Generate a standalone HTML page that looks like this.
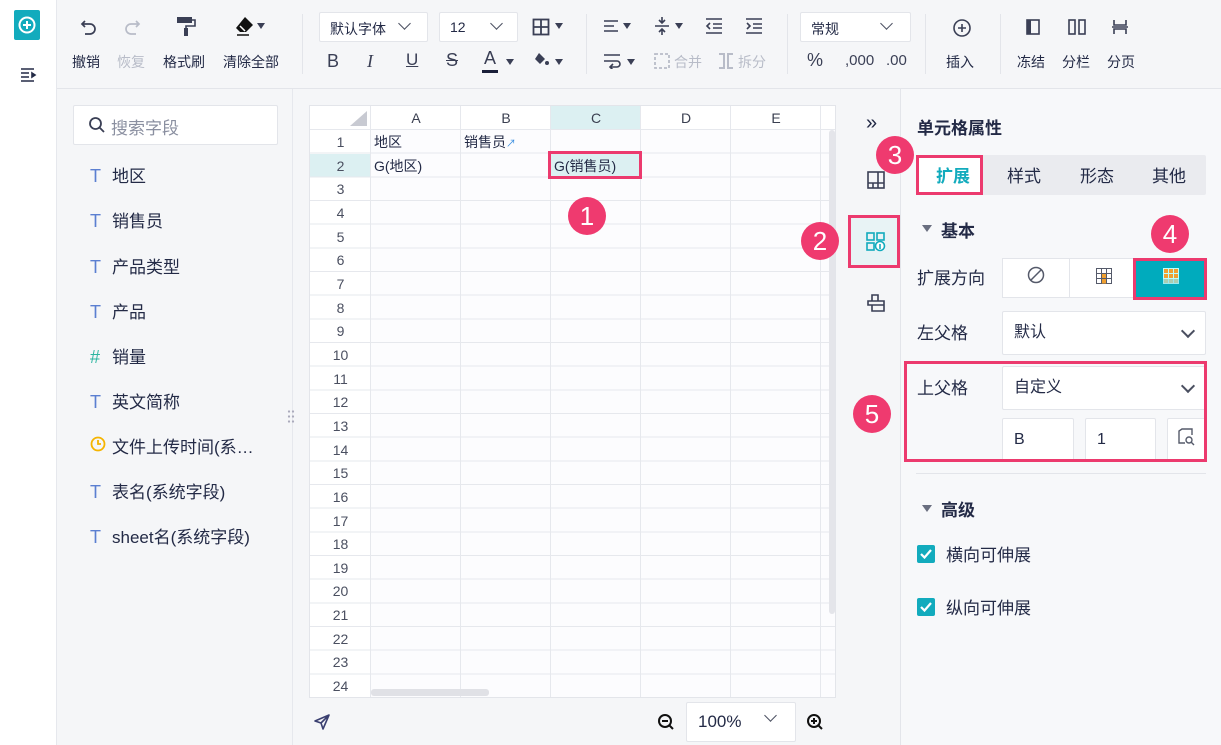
<!DOCTYPE html>
<html><head><meta charset="utf-8"><style>
*{box-sizing:border-box;margin:0;padding:0}
body{width:1221px;height:745px;overflow:hidden;background:#f5f6f8;font-family:"Liberation Sans","Noto Sans CJK SC",sans-serif;color:#232a46;position:relative;font-size:14px}
.a{position:absolute}
.lb{left:0;top:0;width:57px;height:745px;background:#fff;border-right:1px solid #e6e8ed;z-index:0}
.tb{left:57px;top:0;width:1164px;height:89px;border-bottom:1px solid #e3e5ea;background:#f5f6f8}
.lbl{font-size:14px;color:#232a46;white-space:nowrap}
.dis{color:#b8bcc8}
.sel{background:#fff;border:1px solid #e3e5ea;border-radius:2px;height:30px;font-size:14px;padding:6px 10px}
.vs{width:1px;background:#e3e5ea}
.fp{left:57px;top:89px;width:236px;height:656px;border-right:1px solid #e6e8ed}
.fi{left:90px;font-size:17px;color:#232a46;white-space:nowrap}
.fi b{color:#5b7fd1;font-weight:normal;display:inline-block;width:22px;font-size:18px}
.grid{left:309px;top:105px;width:527px;height:593px;background:#fcfcfe;border:1px solid #e3e5ea;overflow:hidden}
.hl{position:absolute;left:0;width:527px;height:1px;background:#e6e8ed}
.vl{position:absolute;top:0;width:1px;height:593px;background:#e6e8ed}
.ch{position:absolute;top:0;height:24px;text-align:center;font-size:14px;line-height:24px;color:#3a3f50;background:#fff}
.badge{width:38px;height:38px;border-radius:50%;background:#ef3a6f;color:#fff;font-size:26px;text-align:center;line-height:38px}
.rbox{border:3px solid #ec3a6e}
.ic{left:851px;top:89px;width:50px;height:656px;border-right:1px solid #e3e5ea;background:#f5f6f8}
.rp{left:901px;top:89px;width:320px;height:656px;background:#f7f8fa}
.inp{background:#fff;border:1px solid #e3e5ea;border-radius:2px;font-size:16px;padding:0 11px;line-height:42px;height:44px}
.chev{position:absolute;right:12px;top:14px;width:10px;height:10px;border-right:2px solid #4a4f60;border-bottom:2px solid #4a4f60;transform:rotate(45deg)}
.cb{width:18px;height:18px;background:#12abbd;border-radius:2px}
.rn div{height:23.67px;line-height:24px;text-align:center;color:#4a4f60}
</style></head><body>
<div class="a lb"></div>
<div class="a" style="left:14px;top:10px;width:26px;height:30px;background:#12abbd;border-radius:2px"></div>
<svg class="a" style="left:17px;top:15px" width="20" height="20" viewBox="0 0 20 20"><circle cx="10" cy="10" r="7.5" fill="none" stroke="#fff" stroke-width="2"/><path d="M10 6v8M6 10h8" stroke="#fff" stroke-width="2"/></svg>
<svg class="a" style="left:20px;top:67px" width="18" height="16" viewBox="0 0 18 16"><path d="M1 2h13M1 6h8M1 10h8M1 14h13M12 6l3 2-3 2z" stroke="#232a46" stroke-width="1.6" fill="#232a46"/></svg>

<div class="a tb"></div>
<svg class="a" style="left:79px;top:17px" width="20" height="20" viewBox="0 0 20 20"><path d="M6 4L3 7l3 3M3 7h8a5 5 0 010 10H6" fill="none" stroke="#3a3f55" stroke-width="1.7"/></svg>
<svg class="a" style="left:122px;top:17px" width="20" height="20" viewBox="0 0 20 20"><path d="M14 4l3 3-3 3M17 7H9a5 5 0 000 10h5" fill="none" stroke="#b8bcc8" stroke-width="1.7"/></svg>
<svg class="a" style="left:175px;top:15px" width="22" height="22" viewBox="0 0 22 22"><rect x="2" y="2" width="15" height="6" fill="#3a3f55"/><path d="M17 5h3v6h-9v3" fill="none" stroke="#3a3f55" stroke-width="1.6"/><rect x="9" y="13" width="4" height="8" fill="#3a3f55"/></svg>
<svg class="a" style="left:234px;top:15px" width="22" height="22" viewBox="0 0 22 22"><path d="M11 2l8 8-7 7H6L2 13z" fill="#111"/><path d="M6 11l5 5" stroke="#fff" stroke-width="1.5"/><path d="M3 20h12" stroke="#111" stroke-width="1.5"/></svg>
<svg class="a" style="left:257px;top:23px" width="8" height="6"><path d="M0 0h8L4 6z" fill="#3a3f55"/></svg>
<div class="a lbl" style="left:72px;top:52px">撤销</div>
<div class="a lbl dis" style="left:117px;top:52px">恢复</div>
<div class="a lbl" style="left:163px;top:52px">格式刷</div>
<div class="a lbl" style="left:223px;top:52px">清除全部</div>
<div class="a vs" style="left:302px;top:14px;height:60px"></div>
<div class="a sel" style="left:319px;top:12px;width:109px">默认字体</div>
<div class="a chev" style="left:400px;top:19px;width:9px;height:9px;border-width:0 1.5px 1.5px 0"></div>
<div class="a sel" style="left:439px;top:12px;width:79px">12</div>
<div class="a chev" style="left:492px;top:19px;width:9px;height:9px;border-width:0 1.5px 1.5px 0"></div>
<svg class="a" style="left:532px;top:18px" width="18" height="18" viewBox="0 0 18 18"><rect x="1.5" y="1.5" width="15" height="15" fill="none" stroke="#3a3f55" stroke-width="1.8"/><path d="M9 1v16M1 9h16" stroke="#3a3f55" stroke-width="1.8"/></svg>
<svg class="a" style="left:555px;top:23px" width="8" height="6"><path d="M0 0h8L4 6z" fill="#3a3f55"/></svg>
<div class="a" style="left:327px;top:51px;font-size:18px;color:#3a3f55">B</div>
<div class="a" style="left:367px;top:51px;font-size:18px;color:#3a3f55;font-style:italic;font-family:'Liberation Serif',serif">I</div>
<div class="a" style="left:406px;top:50px;font-size:17px;color:#3a3f55;text-decoration:underline">U</div>
<div class="a" style="left:446px;top:50px;font-size:18px;color:#3a3f55;text-decoration:line-through">S</div>
<div class="a" style="left:484px;top:48px;font-size:18px;color:#3a3f55">A</div>
<div class="a" style="left:482px;top:70px;width:16px;height:3px;background:#1a1f3a"></div>
<svg class="a" style="left:506px;top:59px" width="8" height="6"><path d="M0 0h8L4 6z" fill="#3a3f55"/></svg>
<svg class="a" style="left:532px;top:52px" width="18" height="16" viewBox="0 0 18 16"><path d="M7 1l6 6-5 5-5-5z" fill="#3a3f55"/><circle cx="15" cy="11" r="2" fill="#3a3f55"/></svg>
<svg class="a" style="left:555px;top:59px" width="8" height="6"><path d="M0 0h8L4 6z" fill="#3a3f55"/></svg>
<div class="a vs" style="left:586px;top:14px;height:60px"></div>
<svg class="a" style="left:603px;top:18px" width="16" height="16" viewBox="0 0 16 16"><path d="M1 3h14M1 8h10M1 13h14" stroke="#3a3f55" stroke-width="1.6"/></svg>
<svg class="a" style="left:623px;top:23px" width="8" height="6"><path d="M0 0h8L4 6z" fill="#3a3f55"/></svg>
<svg class="a" style="left:654px;top:16px" width="16" height="20" viewBox="0 0 16 20"><path d="M1 10h14M8 1v6M5 4l3 3 3-3M8 19v-6M5 16l3-3 3 3" fill="none" stroke="#3a3f55" stroke-width="1.6"/></svg>
<svg class="a" style="left:675px;top:23px" width="8" height="6"><path d="M0 0h8L4 6z" fill="#3a3f55"/></svg>
<svg class="a" style="left:705px;top:17px" width="18" height="18" viewBox="0 0 18 18"><path d="M1 2h16M8 7h9M8 11h9M1 16h16M5 6L2 9l3 3" fill="none" stroke="#3a3f55" stroke-width="1.6"/></svg>
<svg class="a" style="left:745px;top:17px" width="18" height="18" viewBox="0 0 18 18"><path d="M1 2h16M8 7h9M8 11h9M1 16h16M2 6l3 3-3 3" fill="none" stroke="#3a3f55" stroke-width="1.6"/></svg>
<svg class="a" style="left:603px;top:53px" width="18" height="16" viewBox="0 0 18 16"><path d="M1 2h16M1 8h13a3 3 0 010 6H8M10 11l-3 3 3 3" fill="none" stroke="#3a3f55" stroke-width="1.6"/></svg>
<svg class="a" style="left:627px;top:59px" width="8" height="6"><path d="M0 0h8L4 6z" fill="#3a3f55"/></svg>
<svg class="a" style="left:654px;top:53px" width="16" height="16" viewBox="0 0 16 16"><rect x="1" y="1" width="14" height="14" fill="none" stroke="#b8bcc8" stroke-width="1.8" stroke-dasharray="3 2"/></svg>
<div class="a lbl dis" style="left:674px;top:52px">合并</div>
<svg class="a" style="left:718px;top:53px" width="16" height="16" viewBox="0 0 16 16"><path d="M1 1h5v14H1M15 1h-5v14h5" fill="none" stroke="#b8bcc8" stroke-width="2"/></svg>
<div class="a lbl dis" style="left:738px;top:52px">拆分</div>
<div class="a vs" style="left:787px;top:14px;height:60px"></div>
<div class="a sel" style="left:800px;top:12px;width:111px">常规</div>
<div class="a chev" style="left:882px;top:19px;width:9px;height:9px;border-width:0 1.5px 1.5px 0"></div>
<div class="a" style="left:807px;top:50px;font-size:18px;color:#3a3f55">%</div>
<div class="a" style="left:845px;top:52px;font-size:15px;color:#3a3f55">,000</div>
<div class="a" style="left:886px;top:52px;font-size:15px;color:#3a3f55">.00</div>
<div class="a vs" style="left:925px;top:14px;height:60px"></div>
<svg class="a" style="left:952px;top:18px" width="20" height="20" viewBox="0 0 20 20"><circle cx="10" cy="10" r="8" fill="none" stroke="#3a3f55" stroke-width="1.6"/><path d="M10 6v8M6 10h8" stroke="#3a3f55" stroke-width="1.6"/></svg>
<div class="a lbl" style="left:946px;top:52px">插入</div>
<div class="a vs" style="left:1000px;top:14px;height:60px"></div>
<svg class="a" style="left:1025px;top:19px" width="16" height="16" viewBox="0 0 16 16"><rect x="2" y="1" width="12" height="14" fill="none" stroke="#3a3f55" stroke-width="1.6"/><rect x="2" y="1" width="4" height="14" fill="#3a3f55"/></svg>
<svg class="a" style="left:1068px;top:19px" width="18" height="16" viewBox="0 0 18 16"><rect x="1" y="1" width="6" height="14" fill="none" stroke="#3a3f55" stroke-width="1.6"/><rect x="11" y="1" width="6" height="14" fill="none" stroke="#3a3f55" stroke-width="1.6"/></svg>
<svg class="a" style="left:1112px;top:19px" width="16" height="16" viewBox="0 0 16 16"><path d="M2 1v5h12V1M2 15v-5h12v5M0 8h16" fill="none" stroke="#3a3f55" stroke-width="1.6"/></svg>
<div class="a lbl" style="left:1017px;top:52px">冻结</div>
<div class="a lbl" style="left:1062px;top:52px">分栏</div>
<div class="a lbl" style="left:1107px;top:52px">分页</div>

<div class="a fp"></div>
<div class="a" style="left:73px;top:105px;width:205px;height:40px;background:#fff;border:1px solid #e3e5ea;border-radius:2px"></div>
<svg class="a" style="left:88px;top:116px" width="18" height="18" viewBox="0 0 18 18"><circle cx="7.5" cy="7.5" r="5.5" fill="none" stroke="#3a3f55" stroke-width="1.8"/><path d="M11.5 11.5L16 16" stroke="#3a3f55" stroke-width="1.8"/></svg>
<div class="a" style="left:111px;top:114px;font-size:17px;color:#8a8fa0">搜索字段</div>
<div class="a fi" style="top:162px"><b>T</b>地区</div>
<div class="a fi" style="top:207px"><b>T</b>销售员</div>
<div class="a fi" style="top:253px"><b>T</b>产品类型</div>
<div class="a fi" style="top:298px"><b>T</b>产品</div>
<div class="a fi" style="top:343px"><b style="color:#2bb5a0">#</b>销量</div>
<div class="a fi" style="top:388px"><b>T</b>英文简称</div>
<svg class="a" style="left:90px;top:436px" width="16" height="16" viewBox="0 0 16 16"><circle cx="8" cy="8" r="6.5" fill="none" stroke="#f5b400" stroke-width="1.8"/><path d="M8 4v4h3" fill="none" stroke="#f5b400" stroke-width="1.8"/></svg>
<div class="a fi" style="top:433px;left:112px">文件上传时间(系…</div>
<div class="a fi" style="top:478px"><b>T</b>表名(系统字段)</div>
<div class="a fi" style="top:523px"><b>T</b>sheet名(系统字段)</div>
<div class="a" style="left:287px;top:409px;width:8px;height:16px;background:radial-gradient(circle,#aab 1px,transparent 1.3px) 0 0/4px 5px"></div>

<div class="a grid">
<div class="ch" style="left:0;width:61px"></div>
<svg style="position:absolute;left:40px;top:5px" width="17" height="15"><path d="M17 0v15H0z" fill="#c8cad2"/></svg>
<div class="ch" style="left:61px;width:90px">A</div>
<div class="ch" style="left:151px;width:90px">B</div>
<div class="ch" style="left:241px;width:90px;background:#dcf0f2">C</div>
<div class="ch" style="left:331px;width:90px">D</div>
<div class="ch" style="left:421px;width:90px">E</div>
<div class="ch" style="left:511px;width:16px"></div>
<div class="rn" style="position:absolute;left:0;top:24px;width:61px;background:#fff">
<div>1</div><div style="background:#dcf0f2">2</div><div>3</div><div>4</div><div>5</div><div>6</div><div>7</div><div>8</div><div>9</div><div>10</div><div>11</div><div>12</div><div>13</div><div>14</div><div>15</div><div>16</div><div>17</div><div>18</div><div>19</div><div>20</div><div>21</div><div>22</div><div>23</div><div>24</div>
</div>
<div style="position:absolute;left:0;top:24px;width:527px;height:569px;background:repeating-linear-gradient(to bottom,transparent 0,transparent 22.67px,#e6e8ed 22.67px,#e6e8ed 23.67px)"></div>
<div class="hl" style="top:23px"></div>
<div class="vl" style="left:60px"></div>
<div class="vl" style="left:150px"></div>
<div class="vl" style="left:240px"></div>
<div class="vl" style="left:330px"></div>
<div class="vl" style="left:420px"></div>
<div class="vl" style="left:510px"></div>
<div style="position:absolute;left:64px;top:26px;font-size:14px">地区</div>
<div style="position:absolute;left:154px;top:26px;font-size:14px">销售员<span style="color:#3a8ee0;font-size:10px">↗</span></div>
<div style="position:absolute;left:241px;top:48px;width:91px;height:24px;background:#dcf0f2"></div>
<div style="position:absolute;left:64px;top:50px;font-size:14px">G(地区)</div>
<div style="position:absolute;left:244px;top:50px;font-size:14px">G(销售员)</div>
<div style="position:absolute;left:519px;top:24px;width:6px;height:484px;background:#e4e5ea;border-radius:3px"></div>
<div style="position:absolute;left:61px;top:583px;width:118px;height:7px;background:#e0e1e6;border-radius:3px"></div>
</div>
<div class="a rbox" style="left:548px;top:151px;width:94px;height:28px"></div>
<div class="a badge" style="left:568px;top:197px">1</div>

<svg class="a" style="left:313px;top:713px" width="18" height="18" viewBox="0 0 18 18"><path d="M16 2L2 8l6 2 2 6z M8 10l8-8" fill="none" stroke="#3a3f70" stroke-width="1.6" stroke-linejoin="round"/></svg>
<svg class="a" style="left:657px;top:713px" width="18" height="18" viewBox="0 0 18 18"><circle cx="8" cy="8" r="6" fill="none" stroke="#111" stroke-width="2"/><path d="M5 8h6M12 12l4 4" stroke="#111" stroke-width="2"/></svg>
<div class="a" style="left:686px;top:702px;width:110px;height:40px;background:#fff;border:1px solid #e3e5ea;border-radius:2px;font-size:17px;padding:9px 0 0 11px">100%</div>
<div class="a chev" style="left:766px;top:711px;width:9px;height:9px;border-width:0 1.5px 1.5px 0"></div>
<svg class="a" style="left:806px;top:713px" width="18" height="18" viewBox="0 0 18 18"><circle cx="8" cy="8" r="6" fill="none" stroke="#111" stroke-width="2"/><path d="M5 8h6M8 5v6M12 12l4 4" stroke="#111" stroke-width="2"/></svg>

<div class="a ic"></div>
<div class="a" style="left:866px;top:112px;font-size:20px;color:#232a46">»</div>
<svg class="a" style="left:867px;top:171px" width="18" height="18" viewBox="0 0 18 18"><rect x="1" y="1" width="16" height="16" fill="none" stroke="#3a3f55" stroke-width="1.6"/><path d="M1 12h16M6 12v5M11 12v5M11 1v11" stroke="#3a3f55" stroke-width="1.6"/></svg>
<div class="a" style="left:850px;top:216px;width:50px;height:51px;background:#e8f3f5"></div>
<div class="a rbox" style="left:848px;top:215px;width:52px;height:53px"></div>
<svg class="a" style="left:866px;top:232px" width="20" height="20" viewBox="0 0 20 20"><rect x="1" y="1" width="7" height="7" fill="none" stroke="#12abbd" stroke-width="1.6"/><rect x="11" y="1" width="7" height="7" fill="none" stroke="#12abbd" stroke-width="1.6"/><rect x="1" y="11" width="7" height="7" fill="none" stroke="#12abbd" stroke-width="1.6"/><circle cx="14" cy="14" r="4.5" fill="#fff" stroke="#12abbd" stroke-width="1.6"/><path d="M14 12v5" stroke="#12abbd" stroke-width="1.6"/></svg>
<div class="a badge" style="left:801px;top:222px">2</div>
<svg class="a" style="left:867px;top:294px" width="18" height="18" viewBox="0 0 18 18"><path d="M5 1h6v6H5zM1 7h16v4H1zM5 11h12v6H5z" fill="none" stroke="#3a3f55" stroke-width="1.6"/></svg>

<div class="a rp"></div>
<div class="a" style="left:917px;top:114px;font-size:17px;font-weight:bold">单元格属性</div>
<div class="a" style="left:917px;top:155px;width:289px;height:40px;background:#eaebef;border-radius:2px"></div>
<div class="a" style="left:919px;top:157px;width:62px;height:36px;background:#fff"></div>
<div class="a" style="left:936px;top:162px;font-size:17px;font-weight:bold;color:#12abbd">扩展</div>
<div class="a" style="left:1007px;top:162px;font-size:17px">样式</div>
<div class="a" style="left:1080px;top:162px;font-size:17px">形态</div>
<div class="a" style="left:1152px;top:162px;font-size:17px">其他</div>
<div class="a rbox" style="left:916px;top:155px;width:67px;height:40px"></div>
<div class="a badge" style="left:876px;top:136px">3</div>
<svg class="a" style="left:922px;top:225px" width="10" height="8"><path d="M0 0h10L5 7z" fill="#6a6f80"/></svg>
<div class="a" style="left:941px;top:217px;font-size:17px;font-weight:bold">基本</div>
<div class="a" style="left:917px;top:264px;font-size:17px">扩展方向</div>
<div class="a" style="left:1002px;top:258px;width:204px;height:40px;background:#fff;border:1px solid #e3e5ea"></div>
<div class="a" style="left:1069px;top:259px;width:1px;height:38px;background:#e3e5ea"></div>
<svg class="a" style="left:1027px;top:266px" width="18" height="18" viewBox="0 0 18 18"><circle cx="9" cy="9" r="7.5" fill="none" stroke="#555a6a" stroke-width="1.5"/><path d="M4 14L14 4" stroke="#555a6a" stroke-width="1.5"/></svg>
<svg class="a" style="left:1096px;top:268px" width="16" height="16" viewBox="0 0 16 16"><rect x="0.5" y="0.5" width="15" height="15" fill="#fff" stroke="#555a6a"/><rect x="5.5" y="5.5" width="5" height="10" fill="#f0a030"/><path d="M5.5 0v16M10.5 0v16M0 5.5h16M0 10.5h16" stroke="#555a6a"/></svg>
<div class="a" style="left:1135px;top:259px;width:70px;height:38px;background:#00abbd"></div>
<svg class="a" style="left:1163px;top:268px" width="16" height="16" viewBox="0 0 16 16"><rect width="16" height="16" fill="#f0a030"/><path d="M0 0.5h16M0 5.5h16M0 10.5h16M0 15.5h16M0.5 0v16M5.5 0v16M10.5 0v16M15.5 0v16" stroke="#bff" stroke-width="1"/><rect x="0" y="11" width="16" height="5" fill="#8fe0e8" opacity=".7"/></svg>
<div class="a rbox" style="left:1133px;top:258px;width:74px;height:42px"></div>
<div class="a badge" style="left:1151px;top:215px">4</div>
<div class="a" style="left:917px;top:319px;font-size:17px">左父格</div>
<div class="a inp" style="left:1002px;top:311px;width:204px">默认<div class="chev"></div></div>
<div class="a" style="left:917px;top:374px;font-size:17px">上父格</div>
<div class="a inp" style="left:1002px;top:366px;width:204px">自定义<div class="chev"></div></div>
<div class="a inp" style="left:1002px;top:418px;width:72px">B</div>
<div class="a inp" style="left:1085px;top:418px;width:71px">1</div>
<div class="a inp" style="left:1167px;top:418px;width:39px"></div>
<svg class="a" style="left:1177px;top:428px" width="18" height="18" viewBox="0 0 18 18"><path d="M8 15H2V3l3-2h10v6" fill="none" stroke="#555a6a" stroke-width="1.4"/><circle cx="12" cy="12" r="3" fill="none" stroke="#555a6a" stroke-width="1.4"/><path d="M14 14l3 3" stroke="#555a6a" stroke-width="1.4"/></svg>
<div class="a rbox" style="left:904px;top:361px;width:303px;height:101px"></div>
<div class="a badge" style="left:853px;top:395px">5</div>
<div class="a" style="left:916px;top:473px;width:290px;height:1px;background:#e3e5ea"></div>
<svg class="a" style="left:922px;top:505px" width="10" height="8"><path d="M0 0h10L5 7z" fill="#6a6f80"/></svg>
<div class="a" style="left:941px;top:496px;font-size:17px;font-weight:bold">高级</div>
<div class="a cb" style="left:917px;top:545px"></div>
<svg class="a" style="left:920px;top:549px" width="12" height="10"><path d="M1 5l3.5 3.5L11 1" fill="none" stroke="#fff" stroke-width="2.2"/></svg>
<div class="a" style="left:946px;top:541px;font-size:17px">横向可伸展</div>
<div class="a cb" style="left:917px;top:598px"></div>
<svg class="a" style="left:920px;top:602px" width="12" height="10"><path d="M1 5l3.5 3.5L11 1" fill="none" stroke="#fff" stroke-width="2.2"/></svg>
<div class="a" style="left:946px;top:594px;font-size:17px">纵向可伸展</div>
</body></html>
